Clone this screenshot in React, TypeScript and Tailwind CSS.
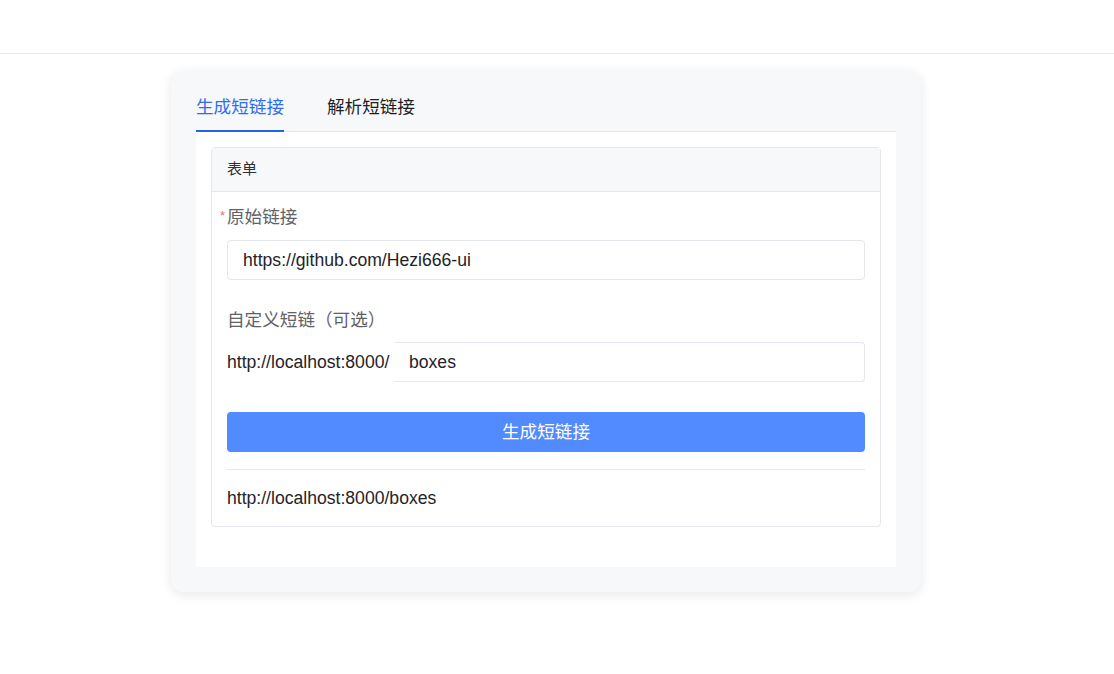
import React from "react";

export default function App() {
  const font = { fontFamily: '"Liberation Sans", "Noto Sans CJK SC", sans-serif' };
  return (
    <div className="min-h-[674px] w-full bg-white" style={font}>
      <div className="h-[54px] border-b border-[#e8e8e8]" />
      <div className="ml-[171px] mt-[16px] w-[750px] rounded-[12px] bg-[#f7f8fa] px-[25px] pb-[25px] pt-[25px] shadow-[0_3px_12px_rgba(0,0,0,0.09)]">
        {/* tabs */}
        <div className="flex gap-[43px] border-b border-[#e4e7ed]">
          <div className="relative h-[36px] text-[17.6px] leading-[24px] text-[#2f6df2]">
            生成短链接
            <div className="absolute bottom-[-1px] left-0 right-0 h-[2px] bg-[#2563eb]" />
          </div>
          <div className="relative h-[36px] text-[17.6px] leading-[24px] text-[#1f1f1f]">解析短链接</div>
        </div>
        {/* content */}
        <div className="bg-white pb-[40px] pl-[15px] pr-[15px] pt-[15px]">
          <div className="rounded-[4px] border border-[#e4e7ed]">
            <div className="flex h-[44px] items-center border-b border-[#e4e7ed] bg-[#f7f8fa] px-[15px] text-[15px] text-[#303133]">
              表单
            </div>
            <div className="px-[15px] pb-[16px] pt-[13px]">
              <div className="relative text-[17.6px] leading-[24px] text-[#606266]">
                <span className="absolute left-[-7px] top-[-1px] text-[13px] text-[#f56c6c]">*</span>
                原始链接
              </div>
              <div className="mt-[11px] flex h-[40px] items-center rounded-[4px] border border-[#e4e7ed] px-[15px] text-[17.6px] text-[#1f2328]">
                https://github.com/Hezi666-ui
              </div>
              <div className="mt-[28px] text-[17.6px] leading-[24px] text-[#606266]">自定义短链（可选）</div>
              <div className="mt-[10px] flex h-[40px] items-center">
                <span className="w-[167px] shrink-0 text-[17.6px] text-[#1f2328]">http://localhost:8000/</span>
                <div className="flex h-[40px] flex-1 items-center rounded-r-[4px] border border-l-0 border-[#e4e7ed] px-[15px] text-[17.6px] text-[#1f2328]">
                  boxes
                </div>
              </div>
              <button className="mt-[30px] flex h-[40px] w-full items-center justify-center rounded-[4px] bg-[#528bff] text-[17.6px] text-white">
                生成短链接
              </button>
              <div className="mt-[17px] h-px bg-[#e4e7ed]" />
              <div className="mt-[16px] text-[17.6px] leading-[24px] text-[#1f2328]">http://localhost:8000/boxes</div>
            </div>
          </div>
        </div>
      </div>
    </div>
  );
}
